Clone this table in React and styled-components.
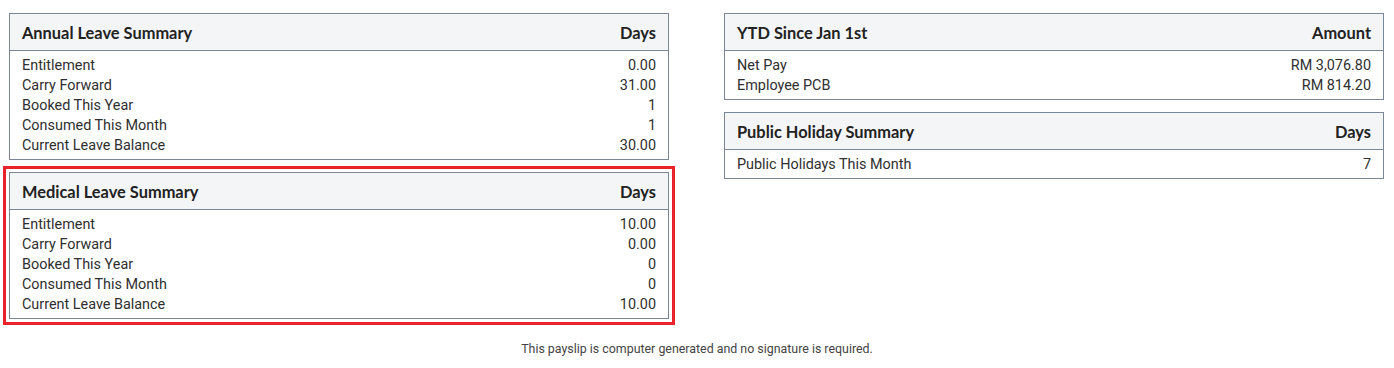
import React from "react";
import styled, { createGlobalStyle } from "styled-components";

const GlobalStyle = createGlobalStyle`
    body {
        margin: 0;
        background: #fff;
        font-family: Roboto, "Liberation Sans", sans-serif;
        color: #2b2b2b;
    }
`;

const annual = [
    ["Entitlement", "0.00"],
    ["Carry Forward", "31.00"],
    ["Booked This Year", "1"],
    ["Consumed This Month", "1"],
    ["Current Leave Balance", "30.00"],
];

const medical = [
    ["Entitlement", "10.00"],
    ["Carry Forward", "0.00"],
    ["Booked This Year", "0"],
    ["Consumed This Month", "0"],
    ["Current Leave Balance", "10.00"],
];

const ytd = [
    ["Net Pay", "RM 3,076.80"],
    ["Employee PCB", "RM 814.20"],
];

const holidays = [["Public Holidays This Month", "7"]];

function SummaryTable({ title, unit, rows, highlight }) {
    return (
        <Table $highlight={highlight}>
            <Head>
                <span>{title}</span>
                <span>{unit}</span>
            </Head>
            <Body>
                {rows.map(([label, value]) => (
                    <Row key={label}>
                        <span>{label}</span>
                        <span>{value}</span>
                    </Row>
                ))}
            </Body>
        </Table>
    );
}

export default function App() {
    return (
        <>
            <GlobalStyle />
            <Page>
                <Columns>
                    <Column>
                        <SummaryTable title="Annual Leave Summary" unit="Days" rows={annual} />
                        <SummaryTable title="Medical Leave Summary" unit="Days" rows={medical} highlight />
                    </Column>
                    <Column>
                        <SummaryTable title="YTD Since Jan 1st" unit="Amount" rows={ytd} />
                        <SummaryTable title="Public Holiday Summary" unit="Days" rows={holidays} />
                    </Column>
                </Columns>
                <Footer>This payslip is computer generated and no signature is required.</Footer>
            </Page>
        </>
    );
}

const Page = styled.div`
    width: 1394px;
    padding-top: 13px;
    box-sizing: border-box;
`;

const Columns = styled.div`
    display: grid;
    grid-template-columns: 660px 660px;
    column-gap: 55px;
    padding-left: 9px;
`;

const Column = styled.div`
    display: flex;
    flex-direction: column;
    gap: 12px;
`;

const Table = styled.div`
    border: 1px solid #7b8796;
    outline: ${(p) => (p.$highlight ? "3.5px solid #e8232b" : "none")};
    outline-offset: 3.5px;
`;

const Head = styled.div`
    display: flex;
    justify-content: space-between;
    align-items: center;
    height: 36px;
    padding: 0 12px;
    background: #f4f5f7;
    border-bottom: 1px solid #7b8796;
    font-family: Lato, "Liberation Sans", sans-serif;
    font-weight: 700;
    font-size: 16.4px;
    color: #222;
`;

const Body = styled.div`
    padding: 5px 12px 3px;
`;

const Row = styled.div`
    display: flex;
    justify-content: space-between;
    height: 20px;
    line-height: 20px;
    font-size: 14.4px;
    color: #2f2f2f;
`;

const Footer = styled.div`
    margin-top: 21px;
    text-align: center;
    font-size: 12.4px;
    line-height: 18px;
    color: #444;
`;
